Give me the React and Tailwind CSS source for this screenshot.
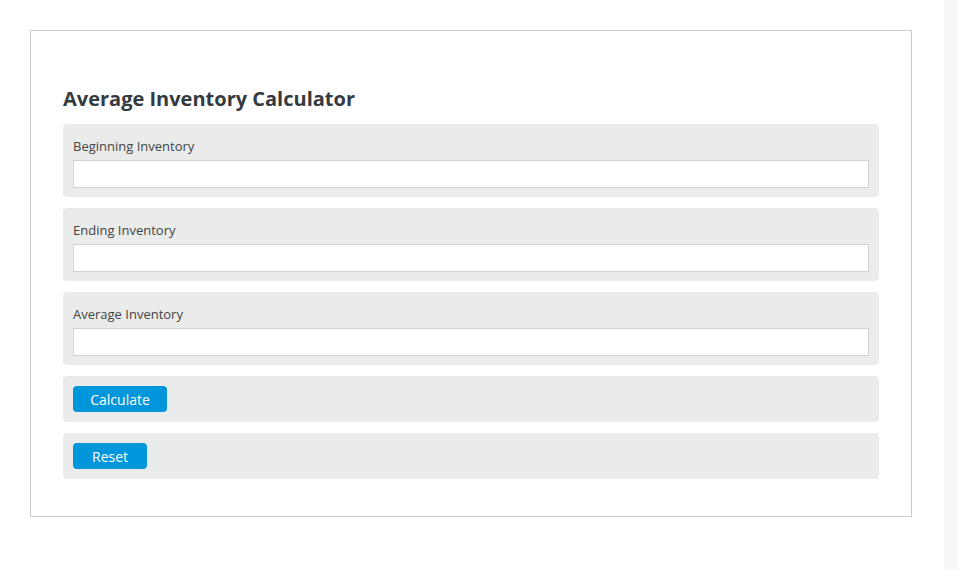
export default function App() {
  const fields = ['Beginning Inventory', 'Ending Inventory', 'Average Inventory']

  return (
    <div className="flex w-[958px] h-[570px] bg-white" style={{ fontFamily: '"Open Sans", "Noto Sans", sans-serif' }}>
      <div className="w-[944px] pt-[30px] pl-[30px]">
        <div className="w-[882px] h-[487px] border border-[#cccccc] bg-white pt-[55px] px-[32px]">
          <h1 className="text-[20px] leading-[26px] font-bold text-[#343a40] mb-[12px]">Average Inventory Calculator</h1>
          <div className="flex flex-col gap-[11px]">
            {fields.map(f => (
              <div key={f} className="bg-[#eaebeb] rounded-[4px] px-[10px] pt-[13px] pb-[9px]">
                <label className="block text-[13px] leading-[18px] text-[#444] mb-[5px]">{f}</label>
                <input className="block w-full h-[28px] bg-white border border-[#d3d3d3] outline-none" />
              </div>
            ))}
            <div className="bg-[#eaebeb] rounded-[4px] px-[10px] py-[10px]">
              <button className="block h-[26px] w-[94px] rounded-[4px] bg-[#0096db] text-white text-[14px]">Calculate</button>
            </div>
            <div className="bg-[#eaebeb] rounded-[4px] px-[10px] py-[10px]">
              <button className="block h-[26px] w-[74px] rounded-[4px] bg-[#0096db] text-white text-[14px]">Reset</button>
            </div>
          </div>
        </div>
      </div>
      <div className="flex-1 bg-[#f8f8fa]" />
    </div>
  )
}
